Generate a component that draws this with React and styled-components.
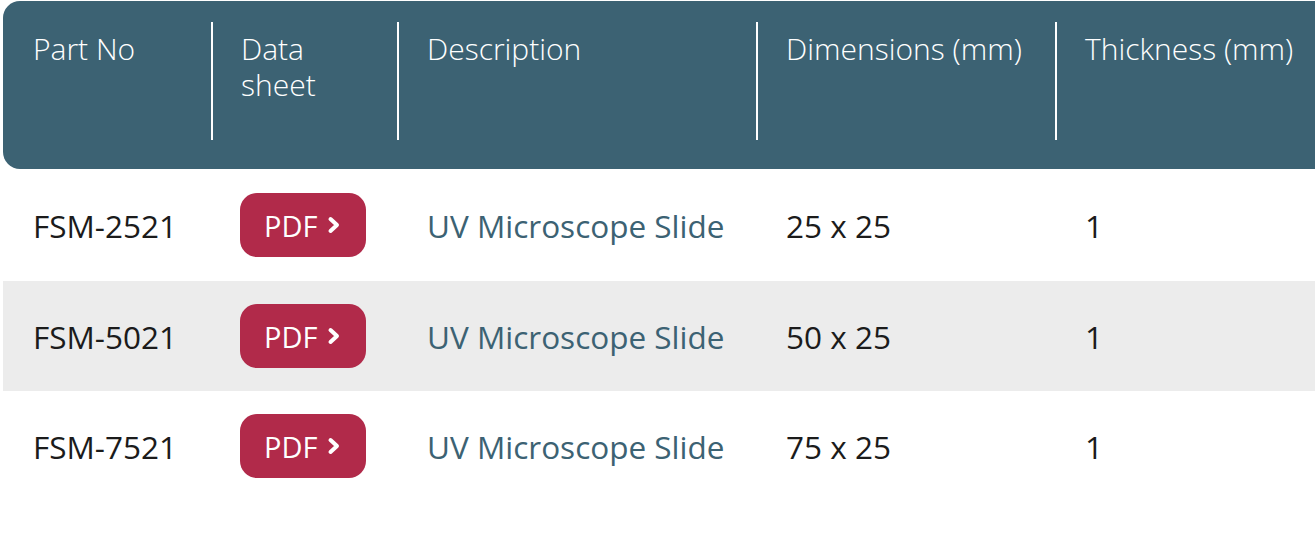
import styled, { createGlobalStyle } from "styled-components";

const GlobalStyle = createGlobalStyle`
  html, body {
    margin: 0;
    padding: 0;
    background: #fff;
    overflow: hidden;
  }
  body {
    font-family: "Open Sans", "Noto Sans", sans-serif;
  }
`;

const columns = "208px 186px 359px 299px 1fr";

const Table = styled.div`
  width: 1370px;
  margin: 1px 0 0 3px;
`;

const HeadRow = styled.div`
  display: grid;
  grid-template-columns: ${columns};
  background: #3c6273;
  border-radius: 17px;
  padding: 21px 0 29px;
`;

const HeadCell = styled.div`
  height: 118px;
  box-sizing: border-box;
  padding: 9px 0 0 ${({ first }) => (first ? "30px" : "28px")};
  border-left: ${({ first }) => (first ? "none" : "2px solid #fff")};
  color: #fff;
  font-size: 30px;
  font-weight: 300;
  line-height: 36px;
`;

const HeadLabel = styled.div`
  max-width: ${({ wrap }) => (wrap ? "100px" : "none")};
  white-space: ${({ wrap }) => (wrap ? "normal" : "nowrap")};
`;

const Row = styled.div`
  display: grid;
  grid-template-columns: ${columns};
  align-items: center;
  height: ${({ h }) => h || 111}px;
  background: ${({ shaded }) => (shaded ? "#ececec" : "transparent")};
`;

const Cell = styled.div`
  padding-left: 30px;
  font-size: 31.5px;
  color: ${({ accent }) => (accent ? "#3c6273" : "#1b1b1b")};
  white-space: nowrap;
`;

const PdfButton = styled.a`
  display: inline-flex;
  align-items: center;
  gap: 10px;
  height: 64px;
  box-sizing: border-box;
  padding: 0 25px 0 24px;
  margin-left: -1px;
  background: #b12a4a;
  border-radius: 17px;
  color: #fff;
  font-size: 29px;
  text-decoration: none;
`;

const Chevron = () => (
  <svg width="14" height="18" viewBox="0 0 14 18">
    <polyline
      points="3.5,3 10,9 3.5,15"
      fill="none"
      stroke="#fff"
      strokeWidth="4"
      strokeLinecap="round"
      strokeLinejoin="round"
    />
  </svg>
);

const headers = [
  ["Part No"],
  ["Data sheet", true],
  ["Description"],
  ["Dimensions (mm)"],
  ["Thickness (mm)"],
];

const parts = [
  ["FSM-2521", "UV Microscope Slide", "25 x 25", "1"],
  ["FSM-5021", "UV Microscope Slide", "50 x 25", "1"],
  ["FSM-7521", "UV Microscope Slide", "75 x 25", "1"],
];

export default function App() {
  return (
    <>
      <GlobalStyle />
      <Table>
        <HeadRow>
          {headers.map(([label, wrap], i) => (
            <HeadCell key={label} first={i === 0}>
              <HeadLabel wrap={wrap}>{label}</HeadLabel>
            </HeadCell>
          ))}
        </HeadRow>
        {parts.map(([no, desc, dims, thick], i) => (
          <Row key={no} shaded={i === 1} h={i === 0 ? 112 : 110}>
            <Cell>{no}</Cell>
            <Cell>
              <PdfButton href="#">
                PDF
                <Chevron />
              </PdfButton>
            </Cell>
            <Cell accent>{desc}</Cell>
            <Cell>{dims}</Cell>
            <Cell>{thick}</Cell>
          </Row>
        ))}
      </Table>
    </>
  );
}
